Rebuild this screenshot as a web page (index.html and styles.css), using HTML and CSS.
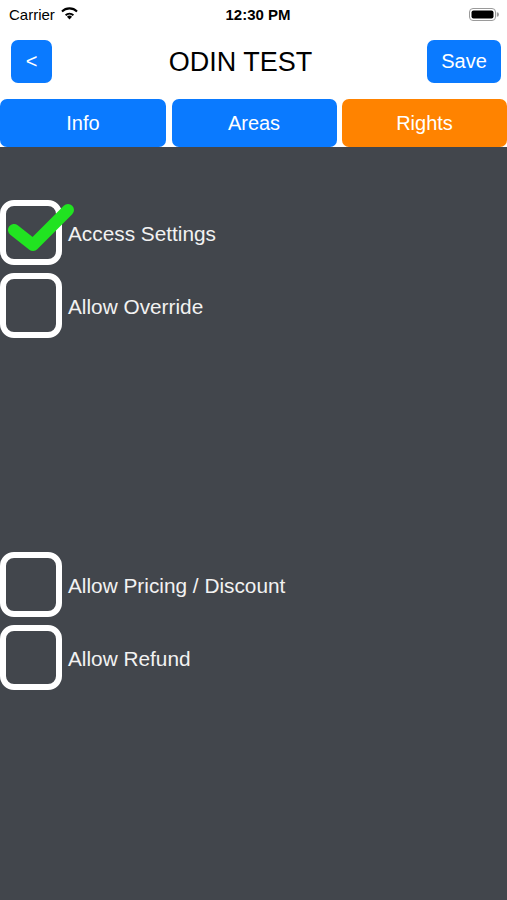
FILE: index.html
```html
<!DOCTYPE html>
<html>
<head>
<meta charset="utf-8">
<link rel="stylesheet" href="styles.css">
</head>
<body>
<div class="screen">
  <div class="status">
    <div class="carrier">Carrier
      <svg class="wifi" width="19" height="14" viewBox="0 0 18 13">
        <path d="M9 12.6 L6.6 10 A3.4 3.4 0 0 1 11.4 10 Z" fill="#000"/>
        <path d="M4.7 8 A6.2 6.2 0 0 1 13.3 8 L12.1 9.3 A4.5 4.5 0 0 0 5.9 9.3 Z" fill="#000"/>
        <path d="M1.2 4.4 A11 11 0 0 1 16.8 4.4 L15.5 5.8 A9.2 9.2 0 0 0 2.5 5.8 Z" fill="#000"/>
      </svg>
    </div>
    <div class="time">12:30 PM</div>
    <div class="battery">
      <svg width="30" height="13" viewBox="0 0 30 13">
        <rect x="0.5" y="0.5" width="26" height="12" rx="3.5" fill="none" stroke="#9a9a9a"/>
        <rect x="2.5" y="2.5" width="22" height="8" rx="2" fill="#000"/>
        <path d="M27.8 4.3 A2 2 0 0 1 27.8 8.7 Z" fill="#9a9a9a"/>
      </svg>
    </div>
  </div>
  <div class="nav">
    <button class="btn back">&lt;</button>
    <div class="title">ODIN TEST</div>
    <button class="btn save">Save</button>
  </div>
  <div class="tabs">
    <div class="tab">Info</div>
    <div class="tab">Areas</div>
    <div class="tab active">Rights</div>
  </div>
  <div class="content">
    <div class="group">
      <div class="row">
        <div class="box">
          <svg class="check" width="76" height="58" viewBox="0 0 76 58">
            <path d="M14 34 L33 49 L68 14" fill="none" stroke="#21e321" stroke-width="12" stroke-linecap="round" stroke-linejoin="round"/>
          </svg>
        </div>
        <span class="label">Access Settings</span>
      </div>
      <div class="row">
        <div class="box"></div>
        <span class="label">Allow Override</span>
      </div>
    </div>
    <div class="group second">
      <div class="row">
        <div class="box"></div>
        <span class="label">Allow Pricing / Discount</span>
      </div>
      <div class="row">
        <div class="box"></div>
        <span class="label">Allow Refund</span>
      </div>
    </div>
  </div>
</div>
</body>
</html>
```
FILE: styles.css
```css
* { box-sizing: border-box; }
html, body { margin: 0; padding: 0; }
body {
  width: 507px;
  height: 900px;
  overflow: hidden;
  background: #fff;
  font-family: "Liberation Sans", Arial, sans-serif;
}
.screen {
  display: flex;
  flex-direction: column;
  height: 900px;
}
.status {
  height: 28px;
  display: flex;
  align-items: center;
  justify-content: space-between;
  padding: 0 8px 0 9px;
  font-size: 15px;
  color: #000;
}
.carrier {
  display: flex;
  align-items: center;
  gap: 5px;
  width: 120px;
}
.wifi { margin-top: -2px; }
.time {
  font-weight: 600;
  font-size: 15px;
  margin-left: 8px;
}
.battery {
  width: 120px;
  display: flex;
  justify-content: flex-end;
}
.nav {
  display: flex;
  align-items: center;
  justify-content: space-between;
  padding: 0 6px 0 11px;
  margin-top: 12px;
  height: 43px;
}
.btn {
  border: none;
  background: #0a7aff;
  color: #fff;
  font-family: inherit;
  font-size: 20px;
  height: 43px;
  border-radius: 7px;
  padding: 0;
}
.back { width: 41px; }
.save { width: 74px; }
.title {
  font-size: 27px;
  color: #000;
  margin-left: 2px;
  margin-top: 2px;
}
.tabs {
  margin-top: 16px;
  display: grid;
  grid-template-columns: 166px 165px 165px;
  justify-content: space-between;
  height: 48px;
}
.tab {
  background: #0a7aff;
  color: #fff;
  border-radius: 7px;
  display: flex;
  align-items: center;
  justify-content: center;
  font-size: 20px;
}
.tab.active { background: #ff8300; }
.content {
  flex: 1;
  background: #42464c;
  padding-top: 53px;
}
.group {
  display: flex;
  flex-direction: column;
  gap: 8px;
}
.group.second { margin-top: 214px; }
.row {
  display: flex;
  align-items: center;
  height: 65px;
}
.box {
  position: relative;
  width: 62px;
  height: 65px;
  border: 6px solid #fff;
  border-radius: 14px;
  flex: none;
}
.check {
  position: absolute;
  left: -6px;
  top: -10px;
}
.label {
  color: #f2f2f2;
  font-size: 20.8px;
  margin-left: 6px;
  margin-top: 2px;
}
```
